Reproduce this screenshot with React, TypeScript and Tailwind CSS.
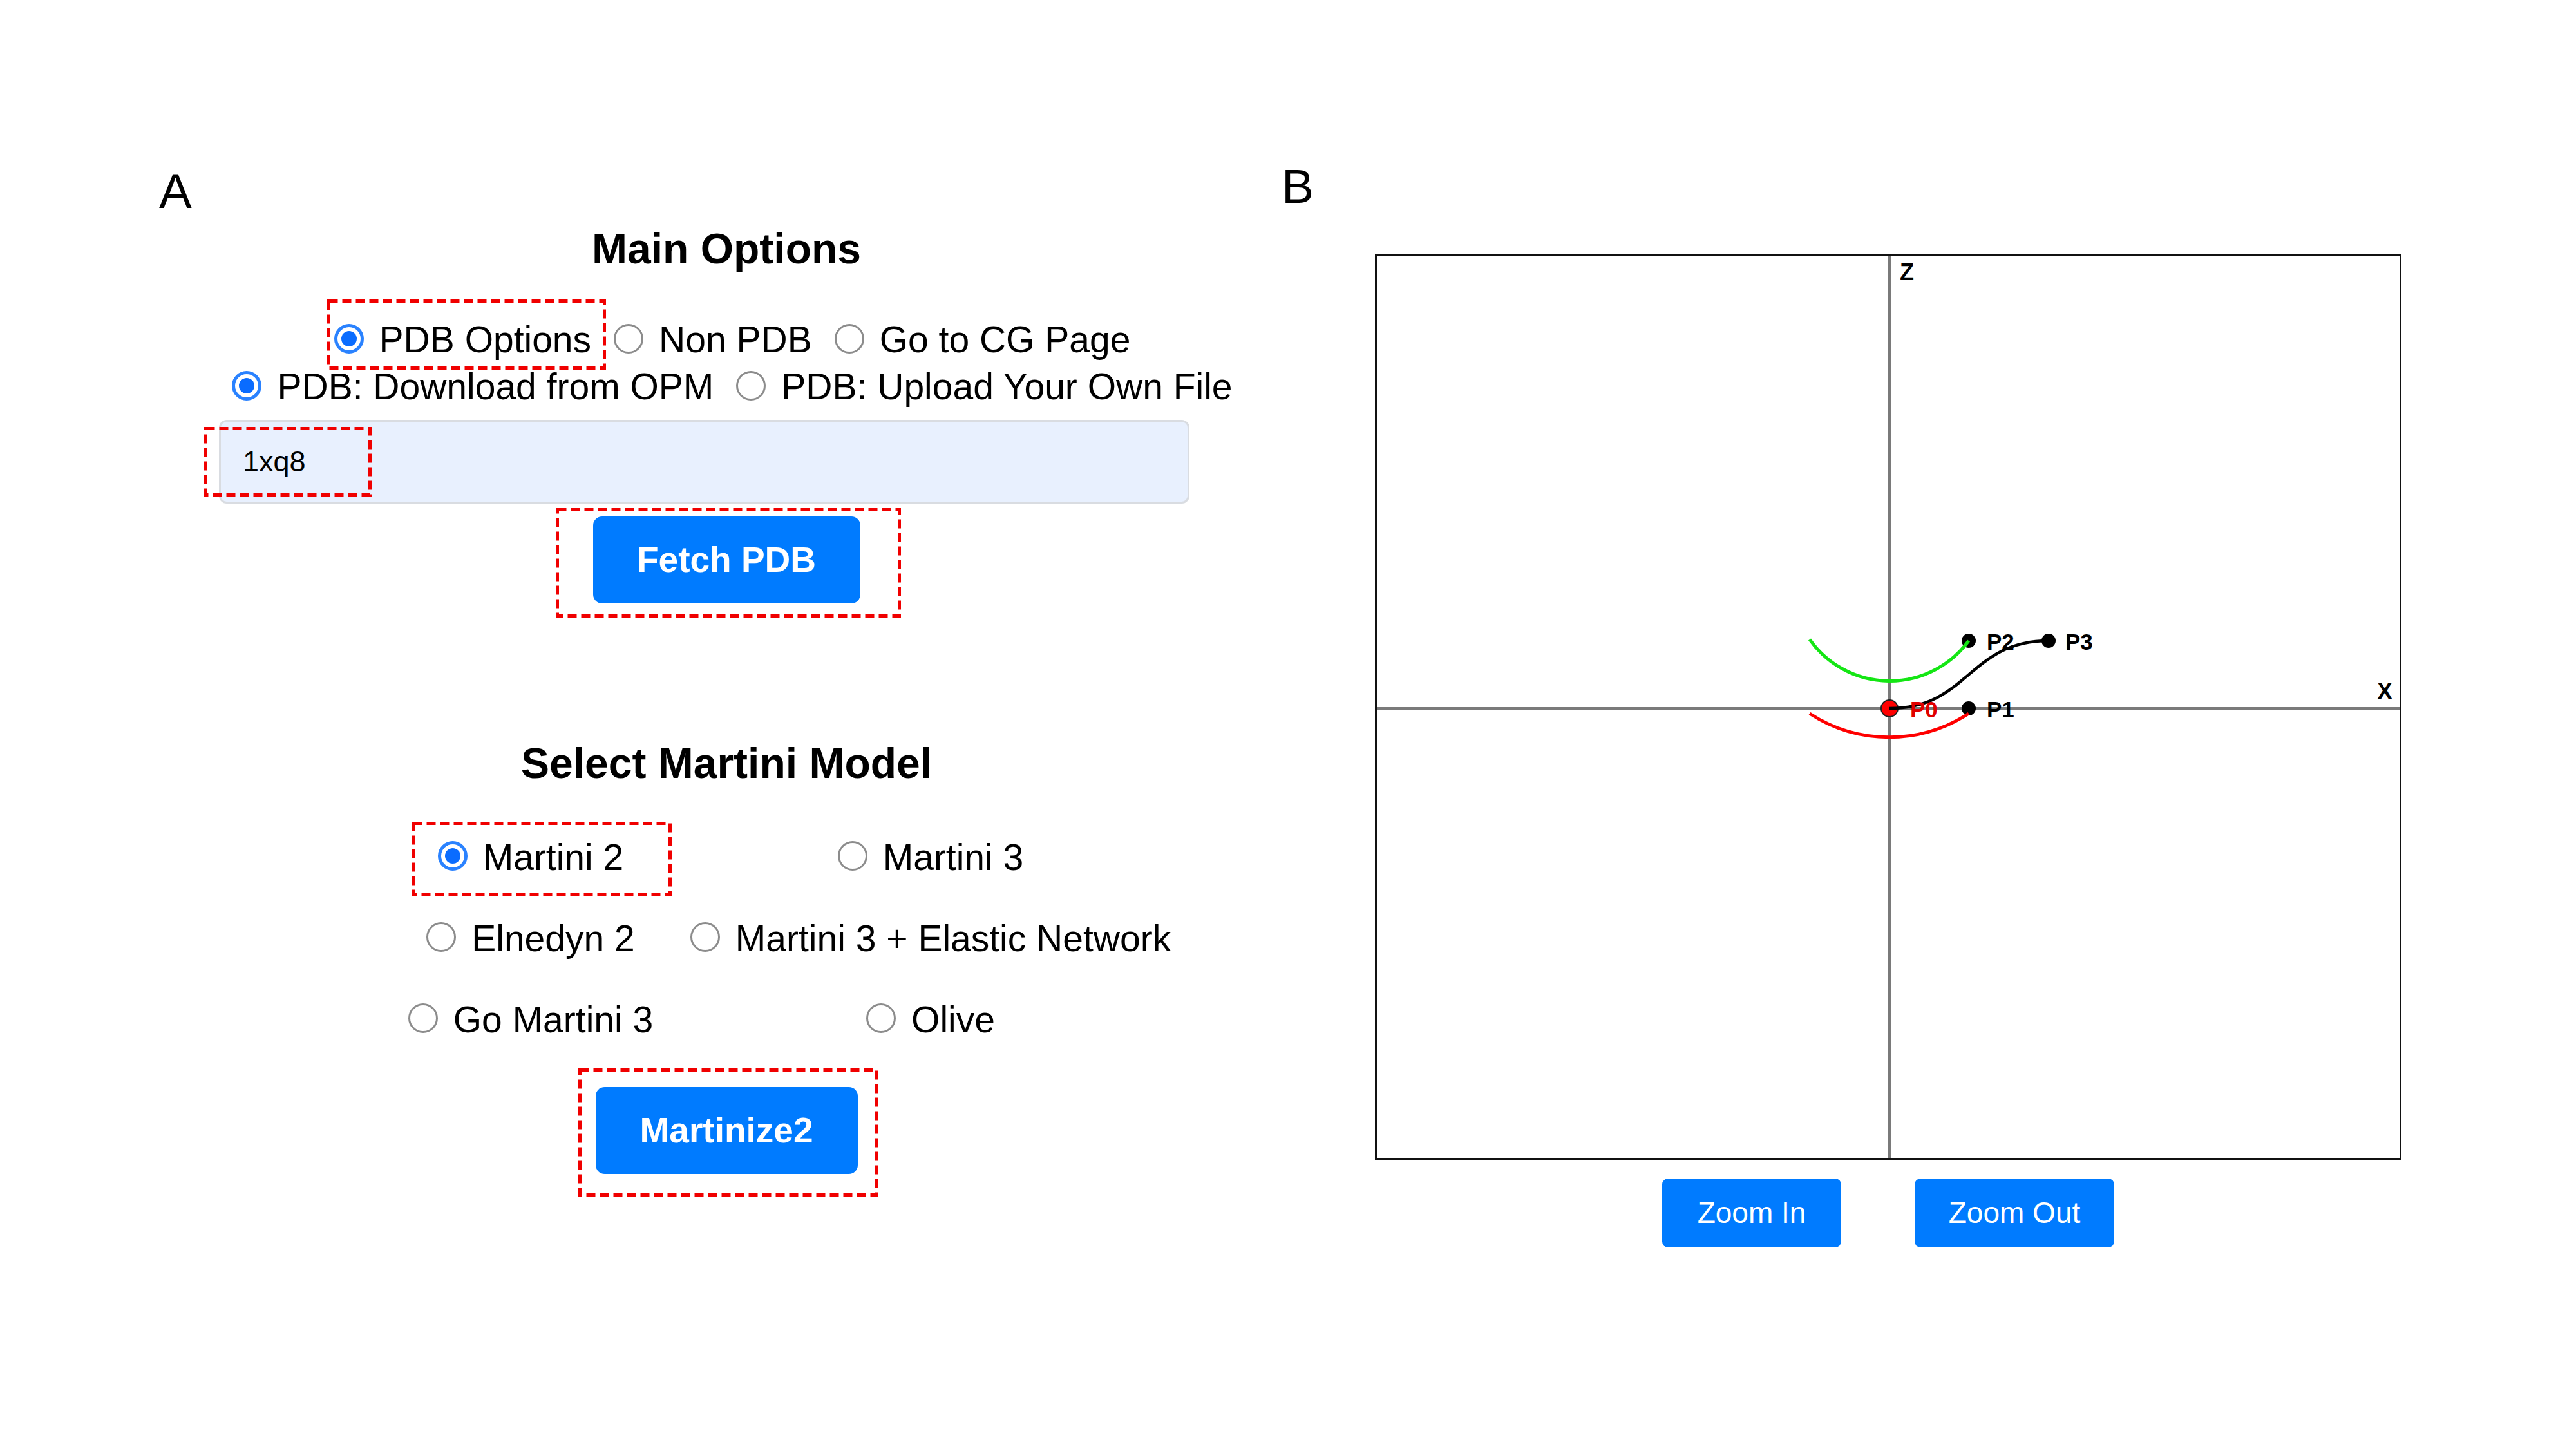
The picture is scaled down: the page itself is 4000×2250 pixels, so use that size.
import React from "react";

type Opt = { label: string; checked?: boolean };

const mainOptions: Opt[] = [
  { label: "PDB Options", checked: true },
  { label: "Non PDB" },
  { label: "Go to CG Page" },
];

const pdbSources: Opt[] = [
  { label: "PDB: Download from OPM", checked: true },
  { label: "PDB: Upload Your Own File" },
];

const models: Opt[] = [
  { label: "Martini 2", checked: true },
  { label: "Martini 3" },
  { label: "Elnedyn 2" },
  { label: "Martini 3 + Elastic Network" },
  { label: "Go Martini 3" },
  { label: "Olive" },
];

function Radio({ checked }: { checked?: boolean }) {
  if (checked) {
    return (
      <span className="flex h-[46px] w-[46px] shrink-0 items-center justify-center rounded-full border-[5px] border-[#2a82ff] bg-white">
        <span className="h-[24px] w-[24px] rounded-full bg-[#0a6cff]" />
      </span>
    );
  }
  return <span className="h-[46px] w-[46px] shrink-0 rounded-full border-[3px] border-[#8c8c8c] bg-white" />;
}

// red dashed annotation frame
function Dashed({ w, h, className }: { w: number; h: number; className: string }) {
  return (
    <svg width={w} height={h} className={"pointer-events-none absolute " + className}>
      <rect x={2.5} y={2.5} width={w - 5} height={h - 5} fill="none" stroke="#f00000" strokeWidth={5} strokeDasharray="14 7" />
    </svg>
  );
}

function RadioItem({ opt, children }: { opt: Opt; children?: React.ReactNode }) {
  return (
    <label className="relative flex shrink-0 items-center gap-[24px]">
      <Radio checked={opt.checked} />
      <span className="whitespace-nowrap pt-[4px] text-[57px] leading-none text-black">{opt.label}</span>
      {children}
    </label>
  );
}

function Canvas() {
  const label = { fontFamily: "'Liberation Sans', Arial, sans-serif", fontWeight: 700 };
  return (
    <div className="h-[1407px] w-full border-[3px] border-[#111]">
      <svg width={1588} height={1401} className="block">
        <line x1={796} y1={0} x2={796} y2={1401} stroke="#7a7a7a" strokeWidth={4} />
        <line x1={0} y1={703} x2={1588} y2={703} stroke="#7a7a7a" strokeWidth={4} />
        <text x={812} y={38} fontSize={36} fill="#000" style={label}>Z</text>
        <text x={1553} y={689} fontSize={36} fill="#000" style={label}>X</text>

        <circle cx={796} cy={703} r={13} fill="#ff0000" stroke="#222" strokeWidth={2} />
        <circle cx={919} cy={703} r={11} fill="#000" />
        <circle cx={919} cy={598} r={11} fill="#000" />
        <circle cx={1043} cy={598} r={11} fill="#000" />

        <path d="M 672 596 A 152 152 0 0 0 919 598" fill="none" stroke="#14e614" strokeWidth={5} />
        <path d="M 672 711 A 226 226 0 0 0 919 711" fill="none" stroke="#ff0000" strokeWidth={5} />
        <path d="M 796 703 C 919 703 919 598 1043 598" fill="none" stroke="#000" strokeWidth={4.5} />

        <text x={828} y={717} fontSize={35} fill="#e00000" style={label}>P0</text>
        <text x={947} y={717} fontSize={35} fill="#000" style={label}>P1</text>
        <text x={947} y={612} fontSize={35} fill="#000" style={label}>P2</text>
        <text x={1069} y={612} fontSize={35} fill="#000" style={label}>P3</text>
      </svg>
    </div>
  );
}

export default function App() {
  return (
    <main className="flex h-[2250px] w-[4000px] bg-white font-['Liberation_Sans',Arial,sans-serif] text-black">
      {/* panel A: options form */}
      <section className="flex w-[1990px] shrink-0 flex-col pt-[259px]">
        <div className="ml-[247px] text-[76px] leading-none">A</div>
        <div className="ml-[328px] flex w-[1600px] flex-col items-center">
          <h2 className="mt-[18px] text-[66px] font-bold leading-none">Main Options</h2>

          <div className="ml-[18px] mt-[70px] flex h-[73px] gap-[35px]">
            {mainOptions.map((o, i) => (
              <RadioItem key={o.label} opt={o}>
                {i === 0 && <Dashed w={433} h={109} className="left-[-11px] top-[-24px]" />}
              </RadioItem>
            ))}
          </div>
          <div className="ml-[18px] flex h-[73px] gap-[35px]">
            {pdbSources.map((o) => (
              <RadioItem key={o.label} opt={o} />
            ))}
          </div>

          <div className="relative ml-[12px] mt-[17px] self-start">
            <input
              readOnly
              value="1xq8"
              className="block h-[130px] w-[1507px] rounded-[12px] border-[3px] border-[#d9dce1] bg-[#e8f0fe] pl-[34px] text-[45px] text-black outline-none"
            />
            <Dashed w={260} h={108} className="left-[-23px] top-[11px]" />
          </div>

          <div className="relative mt-[20px]">
            <button className="h-[135px] w-[415px] rounded-[14px] bg-[#007bff] text-[55px] font-bold text-white">Fetch PDB</button>
            <Dashed w={536} h={170} className="left-[-58px] top-[-13px]" />
          </div>

          <h2 className="mt-[215px] text-[66px] font-bold leading-none">Select Martini Model</h2>

          <div className="ml-[13px] mt-[48px] grid w-[1242px] grid-cols-2">
            {models.map((o, i) => (
              <div key={o.label} className="flex h-[126px] justify-center">
                <RadioItem opt={o}>
                  {i === 0 && <Dashed w={404} h={116} className="left-[-41px] top-[10px]" />}
                </RadioItem>
              </div>
            ))}
          </div>

          <div className="relative mt-[44px]">
            <button className="h-[135px] w-[407px] rounded-[14px] bg-[#007bff] text-[55px] font-bold text-white">Martinize2</button>
            <Dashed w={466} h={199} className="left-[-27px] top-[-29px]" />
          </div>
        </div>
      </section>

      {/* panel B: bezier viewer */}
      <section className="flex flex-col pt-[252px]">
        <div className="text-[75px] leading-none">B</div>
        <div className="ml-[145px] mt-[67px] flex w-[1594px] flex-col items-center">
          <Canvas />
          <div className="mt-[29px] flex gap-[114px]">
            <button className="h-[107px] w-[278px] rounded-[9px] bg-[#007bff] text-[46px] text-white">Zoom In</button>
            <button className="h-[107px] w-[310px] rounded-[9px] bg-[#007bff] text-[46px] text-white">Zoom Out</button>
          </div>
        </div>
      </section>
    </main>
  );
}
